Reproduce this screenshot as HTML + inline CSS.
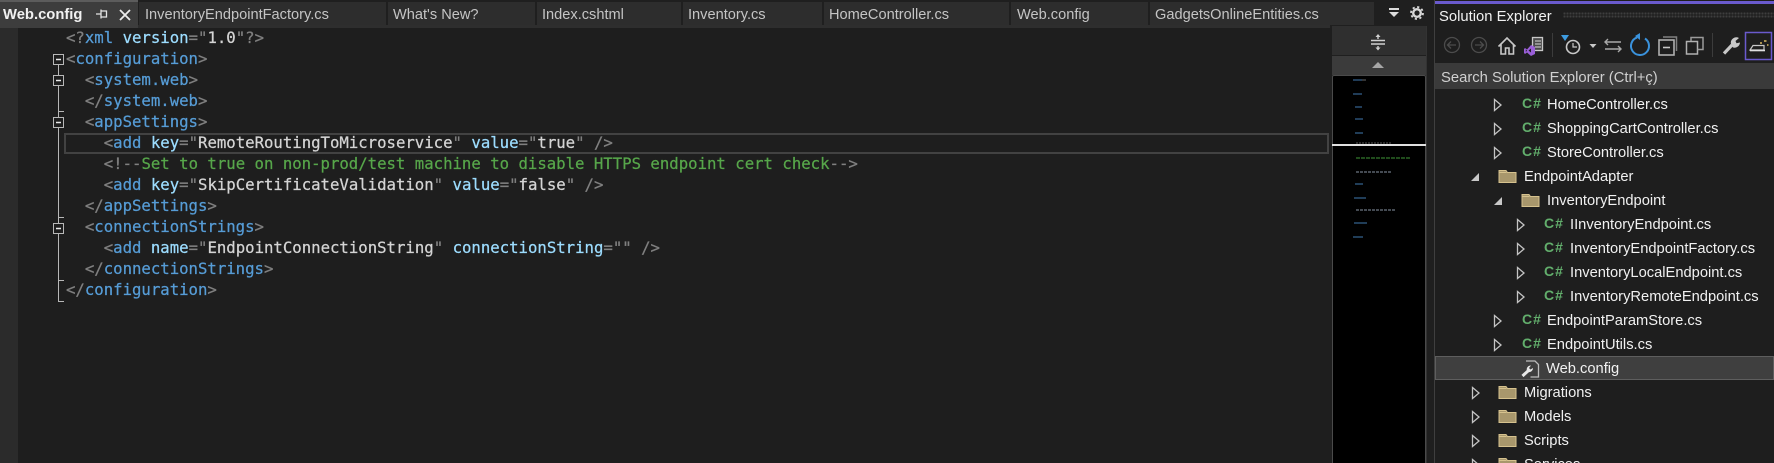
<!DOCTYPE html>
<html><head><meta charset="utf-8"><title>Web.config</title>
<style>
html,body{margin:0;padding:0;background:#1f1f1f;width:1774px;height:463px;overflow:hidden}
#w{position:relative;width:1774px;height:463px;overflow:hidden}
.a{position:absolute;white-space:pre}
.box{position:absolute}
.tab{position:absolute;top:2px;height:23px;background:#2d2d2d}
.t{position:absolute;top:4px;white-space:pre;font:14.6px/22px "Liberation Sans",sans-serif;color:#c4c4c4}
.c{position:absolute;left:66px;white-space:pre;font:15.67px/21px "DejaVu Sans Mono","Liberation Mono",monospace;color:#d4d4d4;-webkit-text-stroke:.25px}
.d{color:#808080}.e{color:#569cd6}.k{color:#9cdcfe}.g{color:#57a64a}
.r{position:absolute;white-space:pre;font:14.7px/24px "Liberation Sans",sans-serif;color:#f1f1f1}
.s{position:absolute;white-space:pre;font:bold 14px/24px "Liberation Sans",sans-serif;color:#62ae6c;letter-spacing:1px;margin-top:-2px}
</style></head><body><div id="w">
<div class="box" style="left:0;top:25px;width:1330px;height:3px;background:#2e2e2e"></div>
<div class="box" style="left:0;top:1px;width:138px;height:27px;background:#3d3d3d"></div>
<div class="box" style="left:0;top:0;width:138px;height:2px;background:#5c5c5c"></div>
<div class="a" style="left:3px;top:4px;font:bold 14.8px/22px 'Liberation Sans',sans-serif;color:#f1f1f1">Web.config</div>
<div class="tab" style="left:139px;width:247px"></div>
<div class="tab" style="left:388px;width:147px"></div>
<div class="tab" style="left:537px;width:144px"></div>
<div class="tab" style="left:683px;width:139px"></div>
<div class="tab" style="left:824px;width:185px"></div>
<div class="tab" style="left:1011px;width:137px"></div>
<div class="tab" style="left:1150px;width:224px"></div>
<div class="t" style="left:145px">InventoryEndpointFactory.cs</div>
<div class="t" style="left:393px">What's New?</div>
<div class="t" style="left:542px">Index.cshtml</div>
<div class="t" style="left:688px">Inventory.cs</div>
<div class="t" style="left:829px">HomeController.cs</div>
<div class="t" style="left:1017px">Web.config</div>
<div class="t" style="left:1155px">GadgetsOnlineEntities.cs</div>

<div class="box" style="left:0;top:28px;width:18px;height:435px;background:#2b2b2b"></div>
<div class="box" style="left:18px;top:28px;width:1314px;height:435px;background:#1e1e1e"></div>
<div class="box" style="left:64px;top:133px;width:1261px;height:17px;border:2px solid #424242"></div>

<div class="c" style="top:27px"><span class="d">&lt;?</span><span class="e">xml</span> <span class="k">version</span><span class="d">=</span><span class="d">"</span>1.0<span class="d">"?&gt;</span></div>
<div class="c" style="top:48px"><span class="d">&lt;</span><span class="e">configuration</span><span class="d">&gt;</span></div>
<div class="c" style="top:69px">  <span class="d">&lt;</span><span class="e">system.web</span><span class="d">&gt;</span></div>
<div class="c" style="top:90px">  <span class="d">&lt;/</span><span class="e">system.web</span><span class="d">&gt;</span></div>
<div class="c" style="top:111px">  <span class="d">&lt;</span><span class="e">appSettings</span><span class="d">&gt;</span></div>
<div class="c" style="top:132px">    <span class="d">&lt;</span><span class="e">add</span> <span class="k">key</span><span class="d">="</span>RemoteRoutingToMicroservice<span class="d">"</span> <span class="k">value</span><span class="d">="</span>true<span class="d">" /&gt;</span></div>
<div class="c" style="top:153px">    <span class="d">&lt;!--</span><span class="g">Set to true on non-prod/test machine to disable HTTPS endpoint cert check</span><span class="d">--&gt;</span></div>
<div class="c" style="top:174px">    <span class="d">&lt;</span><span class="e">add</span> <span class="k">key</span><span class="d">="</span>SkipCertificateValidation<span class="d">"</span> <span class="k">value</span><span class="d">="</span>false<span class="d">" /&gt;</span></div>
<div class="c" style="top:195px">  <span class="d">&lt;/</span><span class="e">appSettings</span><span class="d">&gt;</span></div>
<div class="c" style="top:216px">  <span class="d">&lt;</span><span class="e">connectionStrings</span><span class="d">&gt;</span></div>
<div class="c" style="top:237px">    <span class="d">&lt;</span><span class="e">add</span> <span class="k">name</span><span class="d">="</span>EndpointConnectionString<span class="d">"</span> <span class="k">connectionString</span><span class="d">="" /&gt;</span></div>
<div class="c" style="top:258px">  <span class="d">&lt;/</span><span class="e">connectionStrings</span><span class="d">&gt;</span></div>
<div class="c" style="top:279px"><span class="d">&lt;/</span><span class="e">configuration</span><span class="d">&gt;</span></div>

<!-- scrollbar / minimap -->
<div class="box" style="left:1332px;top:26px;width:94px;height:29px;background:#2f2f2f"></div>
<div class="box" style="left:1332px;top:56px;width:94px;height:19px;background:#3b3b3b"></div>
<div class="box" style="left:1332px;top:75px;width:92px;height:390px;background:#000;border:1px solid #4a4a4a;border-radius:2px"></div>
<div class="box" style="left:1426px;top:26px;width:1px;height:437px;background:#333"></div>
<div class="box" style="left:1332px;top:144px;width:94px;height:2px;background:#e0e0e0"></div>

<!-- solution explorer -->
<div class="box" style="left:1434px;top:0;width:340px;height:463px;background:#1e1e1e;border-left:1px solid #3f3f3f"></div>
<div class="box" style="left:1435px;top:1px;width:339px;height:3px;background:#6a5acd"></div>
<div class="a" style="left:1439px;top:6px;font:14.8px/22px 'Liberation Sans',sans-serif;color:#f1f1f1">Solution Explorer</div>
<div class="box" style="left:1563px;top:12px;width:211px;height:6px;background-image:radial-gradient(#3e3e3e 1px,transparent 1.2px);background-size:3px 3px"></div>
<div class="box" style="left:1435px;top:63px;width:339px;height:26px;background:#3a3a3a"></div>
<div class="a" style="left:1441px;top:67px;font:14.8px/22px 'Liberation Sans',sans-serif;color:#d0d0d0">Search Solution Explorer (Ctrl+ç)</div>
<div class="box" style="left:1435px;top:356px;width:337px;height:22px;background:#3f3f3f;border:1px solid #5e5e5e"></div>

<div class="s" style="left:1522px;top:93px">C#</div><div class="r" style="left:1547px;top:93px">HomeController.cs</div>
<div class="s" style="left:1522px;top:117px">C#</div><div class="r" style="left:1547px;top:117px">ShoppingCartController.cs</div>
<div class="s" style="left:1522px;top:141px">C#</div><div class="r" style="left:1547px;top:141px">StoreController.cs</div>
<div class="r" style="left:1524px;top:165px">EndpointAdapter</div>
<div class="r" style="left:1547px;top:189px">InventoryEndpoint</div>
<div class="s" style="left:1544px;top:213px">C#</div><div class="r" style="left:1570px;top:213px">IInventoryEndpoint.cs</div>
<div class="s" style="left:1544px;top:237px">C#</div><div class="r" style="left:1570px;top:237px">InventoryEndpointFactory.cs</div>
<div class="s" style="left:1544px;top:261px">C#</div><div class="r" style="left:1570px;top:261px">InventoryLocalEndpoint.cs</div>
<div class="s" style="left:1544px;top:285px">C#</div><div class="r" style="left:1570px;top:285px">InventoryRemoteEndpoint.cs</div>
<div class="s" style="left:1522px;top:309px">C#</div><div class="r" style="left:1547px;top:309px">EndpointParamStore.cs</div>
<div class="s" style="left:1522px;top:333px">C#</div><div class="r" style="left:1547px;top:333px">EndpointUtils.cs</div>
<div class="r" style="left:1546px;top:357px">Web.config</div>
<div class="r" style="left:1524px;top:381px">Migrations</div>
<div class="r" style="left:1524px;top:405px">Models</div>
<div class="r" style="left:1524px;top:429px">Scripts</div>
<div class="r" style="left:1524px;top:453px">Services</div>

<svg class="box" style="left:0;top:0" width="1774" height="463" viewBox="0 0 1774 463" fill="none">
<defs>
<g id="fo"><path d="M.5 1.500h7l1.500 2h8.500v10H.5z" fill="#a8976c" stroke="#d6c28e"/><path d="M1 3.500h7" stroke="#d6c28e"/></g>
<path id="ar" d="M.5-5.500L7 0 .5 5.500z" stroke="#c4c4c4" stroke-width="1.300" fill="#1e1e1e"/>
<path id="aa" d="M8-4V4H0z" fill="#c8c8c8"/>
</defs>

<!-- tab icons -->
<path d="M96 14h5M101 9.500v9M101 11h5.500v6H101" stroke="#e4e4e4" stroke-width="1.300"/>
<path d="M120 10l10 10M130 10l-10 10" stroke="#ececec" stroke-width="1.800"/>
<path d="M1389 8h10v2h-10z" fill="#dcdcdc"/><path d="M1389 12h10l-5 5z" fill="#dcdcdc"/>
<circle cx="1417" cy="13" r="3.800" stroke="#d8d8d8" stroke-width="2.400"/>
<circle cx="1417" cy="13" r="6" stroke="#d8d8d8" stroke-width="1.800" stroke-dasharray="2.200 2.500"/>

<!-- outlining -->
<g stroke="#b8b8b8" stroke-width="1">
<path d="M58.500 64v11M58.500 85v32M58.500 127v96M58.500 233v68.500H64M58.500 111.500H64M58.500 217.500H64M58.500 280.500H64"/>
<rect x="53.500" y="54.500" width="10" height="10" fill="#1e1e1e"/>
<rect x="53.500" y="75.500" width="10" height="10" fill="#1e1e1e"/>
<rect x="53.500" y="117.500" width="10" height="10" fill="#1e1e1e"/>
<rect x="53.500" y="223.500" width="10" height="10" fill="#1e1e1e"/>
</g>
<path d="M56 59.500h5M56 80.500h5M56 122.500h5M56 228.500h5" stroke="#e8e8e8" stroke-width="1.400"/>

<!-- scroll button icons -->
<path d="M1371 40.500h14M1371 44h14" stroke="#d0d0d0" stroke-width="1.500"/>
<path d="M1378 36v3M1378 46v3" stroke="#d0d0d0" stroke-width="1.400"/>
<path d="M1375.500 37l2.500-3 2.500 3zM1375.500 47.500l2.500 3 2.500-3z" fill="#d0d0d0"/>
<path d="M1372 68l6-6 6 6z" fill="#a6a6a6"/>

<!-- minimap -->
<g stroke-width="1.200" opacity=".85">
<path d="M1353 80h9" stroke="#3f78ad"/><path d="M1362 80h4" stroke="#666"/>
<path d="M1353 94h9" stroke="#3f78ad"/>
<path d="M1355 107h7" stroke="#3f78ad"/>
<path d="M1355 119h8" stroke="#3f78ad"/>
<path d="M1355 133h8" stroke="#3f78ad"/>
<path d="M1356 143h36" stroke="#555" stroke-dasharray="2 1"/>
<path d="M1356 158h54" stroke="#3f8f35" stroke-dasharray="4 1"/>
<path d="M1356 172h36" stroke="#7f8d9a" stroke-dasharray="3 1"/>
<path d="M1355 184h8" stroke="#3f78ad"/>
<path d="M1354 198h12" stroke="#3f78ad"/>
<path d="M1356 210h40" stroke="#7f8d9a" stroke-dasharray="3 1"/>
<path d="M1354 223h13" stroke="#3f78ad"/>
<path d="M1353 237h10" stroke="#3f78ad"/>
</g>

<!-- toolbar -->
<g stroke="#4c4c4c" stroke-width="1.300">
<circle cx="1452" cy="45" r="7.500"/><path d="M1456 45h-8M1451 41.500L1447.500 45l3.500 3.500"/>
<circle cx="1479" cy="45" r="7.500"/><path d="M1475 45h8M1480 41.500l3.500 3.500-3.500 3.500"/>
</g>
<path d="M1498.500 46.500l8.500-8.500 8.500 8.500M1501 44v10h4.500v-6h3.500v6h4.500V44" stroke="#c8c8c8" stroke-width="1.600"/>
<rect x="1532.500" y="37.500" width="10" height="13" fill="#4a4a4a" stroke="#c8c8c8" stroke-width="1.300"/>
<path d="M1535 41h6M1535 44h6M1535 47h6" stroke="#d8d8d8" stroke-width="1.100"/>
<path fill-rule="evenodd" d="M1531 45l4 2v7l-4 2-4-3.500-2 1.500-1-1v-4l1-1 2 1.500zM1531 48.500l-2.500 2 2.500 2zM1525.800 49.500v2.400l1.300-1.200z" fill="#9a5fd8"/>
<path d="M1552.500 33v24M1712.500 33v24" stroke="#3c3c3c"/>
<path d="M1561 35h8l-4 6z" fill="#3d9be0"/>
<circle cx="1573" cy="47" r="6.500" stroke="#c8c8c8" stroke-width="1.600"/>
<path d="M1573 43v4h4" stroke="#c8c8c8" stroke-width="1.200"/>
<path d="M1589.500 44h7l-3.500 4z" fill="#c8c8c8"/>
<path d="M1605 42h16M1608 39l-3 3 3 3M1605 49h16M1618 46l3 3-3 3" stroke="#a8a8a8" stroke-width="1.400"/>
<path d="M1637 37.500a9 9 0 1 0 8 1" stroke="#3a92dc" stroke-width="2"/>
<path d="M1635 36l5-3v7z" fill="#3a92dc"/>
<rect x="1659" y="40" width="15" height="15" stroke="#b0b0b0" stroke-width="1.600"/>
<path d="M1663 37h13.500v14" stroke="#808080" stroke-width="1.500"/>
<path d="M1663 47.500h7" stroke="#c8c8c8" stroke-width="1.600"/>
<rect x="1686.500" y="41.500" width="11" height="12.500" stroke="#b0b0b0" stroke-width="1.500"/>
<path d="M1691 41v-3.500h12v12h-5.500" stroke="#9a9a9a" stroke-width="1.500"/>
<path d="M1724 53.500l8-8.500" stroke="#c8c8c8" stroke-width="3.200"/>
<path d="M1731 44a5.500 5.500 0 0 1 8-6l-3.500 3 1 2.200 3.500-.7a5.500 5.500 0 0 1-7 5z" fill="#c8c8c8"/>
<rect x="1745.500" y="32.500" width="26" height="27" stroke="#6a5acd" stroke-width="1.500"/>
<path d="M1750 50l3-4.500h11V50z" stroke="#c8c8c8" stroke-width="1.200"/>
<path d="M1750 50.500h15" stroke="#e0e0e0" stroke-width="1.600"/>
<path d="M1764 41h2.500M1760 43h2M1767 45h1.500" stroke="#d8b860" stroke-width="1.600"/>

<!-- tree arrows -->
<use href="#ar" x="1494" y="105"/><use href="#ar" x="1494" y="129"/><use href="#ar" x="1494" y="153"/>
<use href="#aa" x="1471" y="177"/><use href="#aa" x="1494" y="201"/>
<use href="#ar" x="1517" y="225"/><use href="#ar" x="1517" y="249"/><use href="#ar" x="1517" y="273"/><use href="#ar" x="1517" y="297"/>
<use href="#ar" x="1494" y="321"/><use href="#ar" x="1494" y="345"/>
<use href="#ar" x="1472" y="393"/><use href="#ar" x="1472" y="417"/><use href="#ar" x="1472" y="441"/><use href="#ar" x="1472" y="465"/>
<!-- folders -->
<use href="#fo" x="1498.500" y="169"/><use href="#fo" x="1521.500" y="193"/>
<use href="#fo" x="1498.500" y="385"/><use href="#fo" x="1498.500" y="409"/><use href="#fo" x="1498.500" y="433"/><use href="#fo" x="1498.500" y="457"/>
<!-- config file icon -->
<path d="M1526 361h9l3.500 3.500V377h-8" stroke="#bdbdbd" stroke-width="1.300"/>
<path d="M1522.500 376l6-5.500" stroke="#e8e8e8" stroke-width="3"/>
<path d="M1527 371a4 4 0 0 1 4-5.500l-2 2.500 1.500 1.500 2.500-1.500a4 4 0 0 1-5 4z" fill="#e8e8e8"/>
</svg>
</div></body></html>
